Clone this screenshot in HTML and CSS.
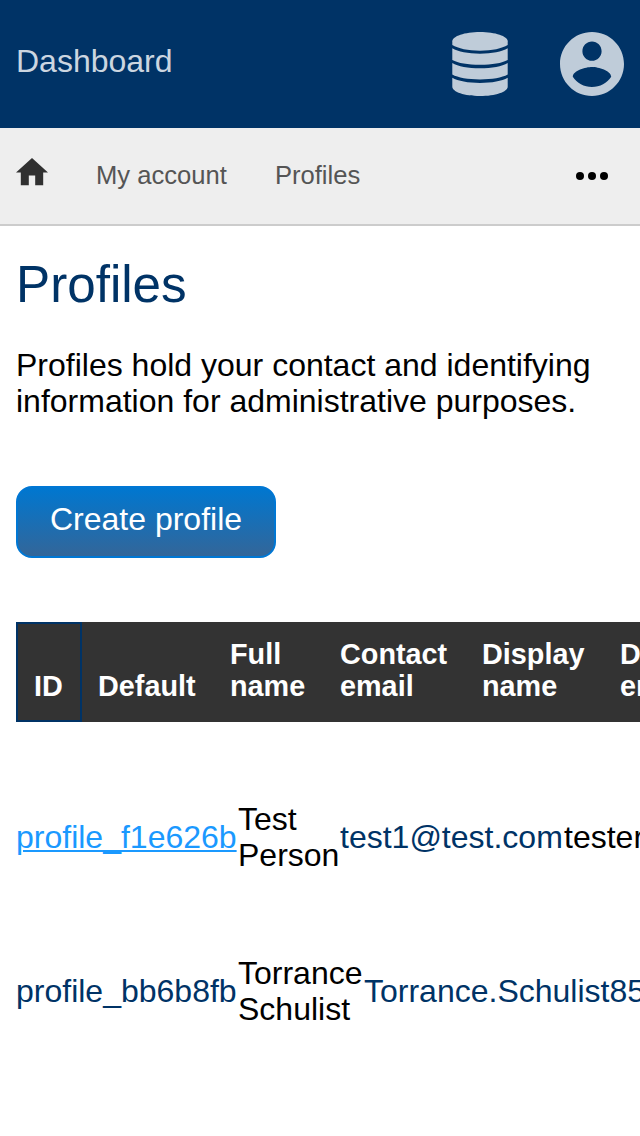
FILE: index.html
```html
<!DOCTYPE html>
<html lang="en">
<head>
<meta charset="utf-8">
<title>Profiles</title>
<link rel="stylesheet" href="styles.css">
</head>
<body>
<header class="topbar">
  <span class="brand">Dashboard</span>
  <svg class="db" viewBox="0 0 56 64"><path d="M.3 9.300C.3 4.200 12.700 0 28 0S55.700 4.200 55.700 9.300V13C50 16.500 40 18.700 28 18.700S6 16.500.3 13Z"/><path d="M.3 16.300C6 19.800 16 21.700 28 21.700S50 19.800 55.700 16.300V28C50 31.200 40 32.800 28 32.800S6 31.200.3 28Z"/><path d="M.3 31C6 34.400 16 36.300 28 36.300S50 34.400 55.700 31V42.500C50 45.700 40 47.400 28 47.400S6 45.700.3 42.500Z"/><path d="M.3 45.700C6 49 16 50.900 28 50.900S50 49 55.700 45.700V54.700C55.700 59.800 43.300 64 28 64S.3 59.800.3 54.700Z"/></svg>
  <svg class="user" viewBox="2 2 20 20"><path d="M12 2C6.480 2 2 6.480 2 12s4.480 10 10 10 10-4.480 10-10S17.520 2 12 2zm0 3c1.660 0 3 1.340 3 3s-1.340 3-3 3-3-1.340-3-3 1.340-3 3-3zm0 14.200c-2.500 0-4.710-1.280-6-3.220.030-1.990 4-3.080 6-3.080 1.990 0 5.970 1.090 6 3.080-1.290 1.940-3.500 3.220-6 3.220z"/></svg>
</header>
<nav class="nav">
  <svg class="home" viewBox="2 3 20 17"><path d="M10 20v-6h4v6h5v-8h3L12 3 2 12h3v8z"/></svg>
  <a>My account</a><a>Profiles</a>
  <svg class="more" viewBox="0 0 32 8"><circle cx="4" cy="4" r="4"/><circle cx="16" cy="4" r="4"/><circle cx="28" cy="4" r="4"/></svg>
</nav>
<main>
  <h1>Profiles</h1>
  <p>Profiles hold your contact and identifying information for administrative purposes.</p>
  <a class="button">Create profile</a>
  <div class="table">
    <div class="thead">
      <div class="th id">ID</div><div class="th def">Default</div><div class="th full">Full<br>name</div><div class="th contact">Contact<br>email</div><div class="th display">Display<br>name</div><div class="th">Display<br>email</div>
    </div>
    <div class="row"><a class="profile active">profile_f1e626b</a><div class="name">Test<br>Person</div><a class="mail">test1@test.com</a><div>tester</div></div>
    <div class="row"><a class="profile">profile_bb6b8fb</a><div class="name wide">Torrance<br>Schulist</div><a>Torrance.Schulist85</a></div>
  </div>
</main>
</body>
</html>
```
FILE: styles.css
```css
* { box-sizing: border-box; }
body { margin: 0; height: 1136px; overflow: hidden; background: #fff; color: #000; font: 32px/36px "Liberation Sans", Arial, sans-serif; }
.topbar { display: flex; height: 128px; padding: 0 16px; align-items: center; background: #036; }
.brand { margin-right: auto; padding-bottom: 6px; color: #ccd6e0; }
.db { width: 56px; height: 64px; margin-right: 52px; fill: #bfccd9; }
.user { width: 64px; height: 64px; fill: #bfccd9; }
.nav { display: flex; align-items: center; height: 98px; padding: 0 32px 0 16px; border-bottom: 2px solid #ccc; background: #eee; color: #555; font-size: 25.6px; gap: 48px; }
.nav a { padding-bottom: 2px; }
.home { width: 32px; height: 27.200px; margin-bottom: 8px; fill: #303030; }
.more { width: 32px; height: 8px; margin-left: auto; fill: #000; }
main { padding: 29px 0 0 16px; overflow: hidden; }
h1 { margin: 0; color: #036; font-size: 51.2px; font-weight: 400; line-height: 60px; }
p { width: 608px; margin: 32px 0 67px; }
.button { display: flex; width: 260px; height: 72px; padding-bottom: 6px; align-items: center; justify-content: center; border: 2px solid #0077d4; border-radius: 16px; background: linear-gradient(#0077d0, #369); color: #fff; }
.table { width: 624px; margin-top: 64px; overflow: hidden; }
.thead { display: flex; width: 900px; height: 100px; align-items: stretch; background: #333; color: #fff; font-size: 28.8px; line-height: 32px; font-weight: 700; }
.th { display: flex; align-items: flex-end; padding: 0 16px 20px; }
.id { width: 66px; padding-bottom: 18px; border: 2px solid #036; }
.def { width: 132px; }
.full { width: 110px; }
.contact { width: 142px; }
.display { width: 138px; }
.row { display: flex; width: 900px; height: 154px; align-items: center; white-space: nowrap; }
.thead + .row { margin-top: 38px; }
.row a { color: #036; }
.profile { width: 222px; }
.row .active { color: #1a99ff; text-decoration: underline; text-decoration-thickness: 2px; text-underline-offset: 2px; }
.name { width: 102px; }
.wide { width: 126px; }
.mail { width: 224px; }
```
